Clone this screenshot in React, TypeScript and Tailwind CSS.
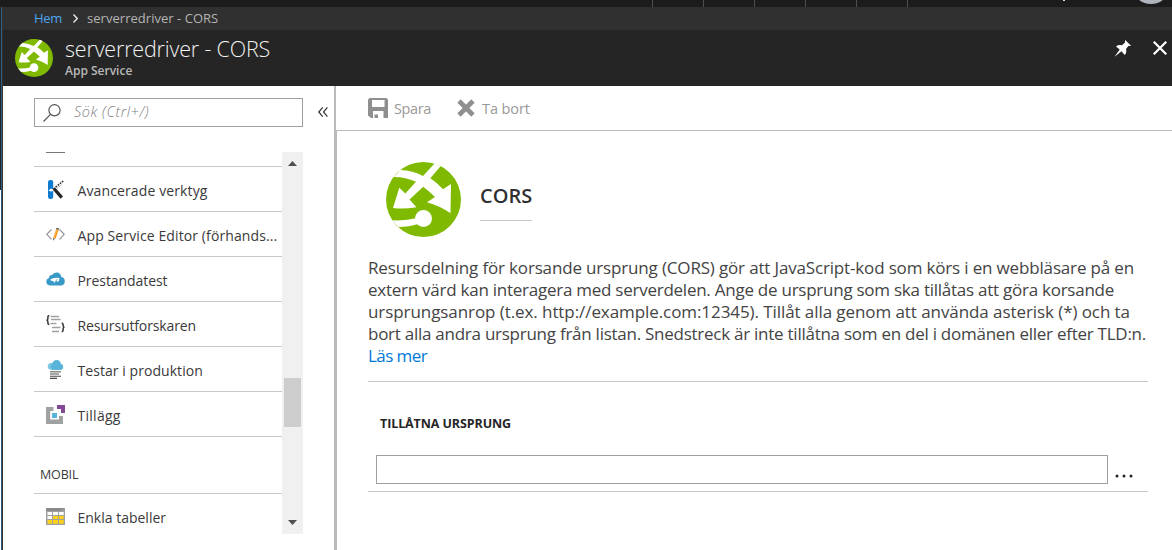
import type { ReactNode } from "react";

function AppServiceLogo({ className }: { className: string }) {
  return (
    <svg viewBox="0 0 75 75" className={className}>
      <circle cx="37.5" cy="37.5" r="37.5" fill="#7fba00" />
      <path
        fill="#fff"
        d="M14.5 8Q27 8.500 37 14L48.500 1.600Q52 2.500 54.500 4.200L44.300 16.200Q51 20.500 57 27.200L65 22L64.500 51.300Q53 43.500 41 40.300L49 35Q44 30 37.300 24.700L23.500 37.600L30.500 45.300Q18 47.300 7 46L13.300 25.800L19.300 31.500L30 19.800Q19 14.800 7.700 15Z"
      />
      <path fill="#fff" d="M6.300 58.300Q20 59 30 56.300L32 62Q23 65 12.300 65Z" />
      <circle cx="37.500" cy="56.500" r="8.500" fill="#fff" />
    </svg>
  );
}

function KuduIcon() {
  return (
    <svg viewBox="0 0 19 19" className="h-[19px] w-[19px]">
      <rect x="2" y="0" width="5.200" height="19" rx="2.200" fill="#0f7bd0" />
      <path d="M2.500 10.500L5 8.600L9.500 10.500L5 11.400Z" fill="#fff" />
      <path d="M8 8.600L15.800 17.600" stroke="#252525" strokeWidth="3.200" />
      <path d="M7.500 8.800L17.500 .800" stroke="#333" strokeWidth="1.500" strokeDasharray="1.700 1" />
      <path d="M11.500 8L16 4.200" stroke="#777" strokeWidth="1" strokeDasharray="1 1" />
    </svg>
  );
}

function EditorIcon() {
  return (
    <svg viewBox="0 0 19 19" className="h-[19px] w-[19px]" fill="none">
      <path d="M5.500 4.300L.800 9.300L5.500 14.300M13.500 4.300L18.200 9.300L13.500 14.300" stroke="#929292" strokeWidth="1.200" />
      <path d="M11.500 4.200L8.500 13.200" stroke="#ff9a1a" strokeWidth="2.600" />
      <path d="M10.900 4.300L8 12.800" stroke="#ffc36a" strokeWidth=".7" />
      <path d="M10.200 3.400L13 4.300" stroke="#666" strokeWidth="1.500" />
      <path d="M7.200 13L9 13.600L7.100 15.700Z" fill="#555" />
    </svg>
  );
}

function LoadTestIcon() {
  return (
    <svg viewBox="0 0 19 19" className="h-[19px] w-[19px]">
      <path fill="#3999c6" d="M4 15.500A3.900 3.900 0 0 1 3 7.900Q3.200 5 6 5.100Q7.500 2.500 10.500 2.500Q14.800 2.700 15.300 7.100A4.250 4.250 0 0 1 15 15.500Z" />
      <path fill="#fff" d="M3.800 10.100Q7.500 6.800 13.500 8L12.800 11.500L10 11.300L8 13.500L7.800 11.500Z" />
      <path d="M8.300 13L11.500 9" stroke="#3999c6" strokeWidth=".7" />
    </svg>
  );
}

function ExplorerIcon() {
  return (
    <svg viewBox="0 0 19 19" className="h-[19px] w-[19px]" fill="none">
      <path d="M4.500 1.500H13M5 4.500H14.500M4.500 8.500H10.500M6 12.500H14.500M6 16.500H13" stroke="#a0a1a2" strokeWidth="1.400" />
      <path d="M3.300 .600Q1.800 .700 1.900 2.200V3.500Q1.900 5 .600 5.200Q1.900 5.400 1.900 6.800V8Q1.900 9.500 3.300 9.600" stroke="#333" strokeWidth="1.500" />
      <path d="M15.700 7.900Q17.100 8 17.100 9.400V10.500Q17.100 12 18.400 12.200Q17.100 12.400 17.100 13.800V15.200Q17.100 16.600 15.700 16.700" stroke="#333" strokeWidth="1.500" />
    </svg>
  );
}

function ProductionIcon() {
  return (
    <svg viewBox="0 0 19 19" className="h-[19px] w-[19px]">
      <path fill="#7cc8e6" d="M4.500 9.800A3.500 3.500 0 0 1 3.500 3.200Q6 2.200 7.500 3.500L9 9.800Z" />
      <path fill="#59b4d9" d="M7.500 10A3.300 3.300 0 0 1 6.300 4Q7 0 10.800 0Q14.300 .200 14.800 3.800A3.200 3.200 0 0 1 15 10Z" />
      <path d="M4 11.700H15M4 14H13" stroke="#8a8b8c" strokeWidth="1.600" />
      <path d="M4 16.300H15M4 18.400H11" stroke="#4a4a4a" strokeWidth="1.100" />
    </svg>
  );
}

function ExtensionsIcon() {
  return (
    <svg viewBox="0 0 19 19" className="h-[19px] w-[19px]">
      <path fill="#a0a1a2" d="M0 2H7.500V6H4.200V14.500H13V11H17V19H0Z" />
      <path fill="#804998" d="M11 0H19V8H15V4H11Z" />
      <path fill="#59b4d9" d="M6 8H11V13H6Z" />
    </svg>
  );
}

function TablesIcon() {
  return (
    <svg viewBox="0 0 19 17" className="h-[17px] w-[19px]">
      <path fill="#a0a1a2" d="M0 0H19V17H0Z" />
      <path fill="#8b8b8b" d="M0 0H19L15 3H0Z" />
      <path fill="#fff" d="M1.500 4H6V7H1.500ZM7 4H12V7H7ZM13 4H17.700V7H13ZM1.500 8H6V11H1.500Z" />
      <path fill="#fcd116" d="M7 8H12V11H7ZM13 8H17.700V11H13ZM1.500 12H6V15.700H1.500ZM7 12H12V15.700H7ZM13 12H17.700V15.700H13Z" />
    </svg>
  );
}

function MenuItem({ icon, label }: { icon: ReactNode; label: ReactNode }) {
  return (
    <li className="flex h-[45px] shrink-0 items-center border-b border-[#c8c8c8] pl-3">
      <span className="flex w-[31.500px] shrink-0 items-center">{icon}</span>
      <span className="whitespace-nowrap pt-[3px] text-[14px] leading-5">{label}</span>
    </li>
  );
}

function Sidebar() {
  return (
    <aside className="flex w-[331px] shrink-0 flex-col pl-[31px]">
      <div className="flex items-start pt-3">
        <label className="flex h-[29px] w-[269px] items-center border border-[#a0a0a0] pl-2">
          <svg viewBox="0 0 18 18" className="h-[18px] w-[18px]" fill="none" stroke="#555" strokeWidth="1.200">
            <circle cx="11.500" cy="6.300" r="5.600" />
            <path d="M7.500 10.300L.500 17.500" />
          </svg>
          <span className="pb-px pl-[13px] text-[14.500px] leading-5 font-light tracking-[0.550px] text-[#808080] italic">Sök (Ctrl+/)</span>
        </label>
        <svg viewBox="0 0 10 10" className="mt-[9px] ml-[15px] h-[10px] w-[10px]" fill="none" stroke="#333" strokeWidth="1.200">
          <path d="M4.700 .400L.800 5L4.700 9.600M9.400 .400L5.500 5L9.400 9.600" />
        </svg>
      </div>
      <div className="mt-[25px] flex h-[382px] w-[269px]">
        <div className="flex w-[248px] flex-col overflow-hidden text-[#3a3a3a]">
          <div className="flex h-[15px] shrink-0 border-b border-[#c8c8c8] pl-3">
            <span className="h-px w-[19px] bg-[#777]" />
          </div>
          <ul className="flex flex-col">
            <MenuItem icon={<KuduIcon />} label={<span className="tracking-[0.118px]">Avancerade verktyg</span>} />
            <MenuItem icon={<EditorIcon />} label={<span className="tracking-[0.110px]">App Service Editor (förhands...</span>} />
            <MenuItem icon={<LoadTestIcon />} label={<span className="tracking-[-0.069px]">Prestandatest</span>} />
            <MenuItem icon={<ExplorerIcon />} label={<span className="tracking-[-0.121px]">Resursutforskaren</span>} />
            <MenuItem icon={<ProductionIcon />} label={<span className="tracking-[0.057px]">Testar i produktion</span>} />
            <MenuItem icon={<ExtensionsIcon />} label={<span className="tracking-[0.280px]">Tillägg</span>} />
          </ul>
          <h2 className="flex h-[57px] shrink-0 items-end border-b border-[#c8c8c8] pb-[9px] pl-1.5 text-[12.500px] leading-[18px] tracking-[-0.150px]">MOBIL</h2>
          <ul className="flex flex-col">
            <MenuItem icon={<TablesIcon />} label="Enkla tabeller" />
          </ul>
        </div>
        <div className="flex w-[21px] flex-col items-center bg-[#f0f0f0]">
          <svg viewBox="0 0 9 5" className="mt-[9px] h-[5px] w-[9px]"><path d="M0 5L4.500 0L9 5Z" fill="#505050" /></svg>
          <div className="mt-[212px] h-[49px] w-[17px] bg-[#cdcdcd]" />
          <svg viewBox="0 0 9 5" className="mt-[93px] h-[5px] w-[9px]"><path d="M0 0L4.500 5L9 0Z" fill="#505050" /></svg>
        </div>
      </div>
    </aside>
  );
}

function Toolbar() {
  return (
    <div className="flex h-[45px] shrink-0 items-center border-b border-[#bababa] pl-8 text-[#999]">
      <svg viewBox="0 0 20 20" className="h-5 w-5">
        <path fill="#8f8f8f" d="M1.500 0H18.500L20 1.500V20H3L0 17.500V1.500Z" />
        <path fill="#fff" d="M4 2H16.500V9H4Z" />
        <path fill="#fff" d="M5 13H15.500V20H10V16.500H6.500V20H5Z" />
      </svg>
      <span className="w-[63px] pt-px pl-1.5 text-[14.500px] tracking-[-0.380px]">Spara</span>
      <svg viewBox="0 0 18 18" className="ml-1.5 h-[18px] w-[18px]">
        <path d="M2 2L16 16M16 2L2 16" stroke="#8f8f8f" strokeWidth="4.600" />
      </svg>
      <span className="pt-px pl-[7px] text-[14.500px] tracking-[-0.080px]">Ta bort</span>
    </div>
  );
}

function Content() {
  return (
    <section className="flex min-w-0 flex-1 flex-col">
      <Toolbar />
      <div className="flex flex-1 flex-col border-l border-[#bababa] pt-[31px] pr-6 pl-[31px]">
        <div className="flex pl-[18px]">
          <AppServiceLogo className="h-[75px] w-[75px]" />
          <h2 className="mt-[18px] ml-[19px] h-[41px] border-b border-[#c8c8c8] text-[20px] leading-[31px] font-semibold text-[#303030]">CORS</h2>
        </div>
        <p className="mt-5 flex flex-col text-[17px] leading-[22px] whitespace-nowrap text-[#444]">
          <span className="tracking-[-0.161px]">Resursdelning för korsande ursprung (CORS) gör att JavaScript-kod som körs i en webbläsare på en</span>
          <span className="tracking-[-0.252px]">extern värd kan interagera med serverdelen. Ange de ursprung som ska tillåtas att göra korsande</span>
          <span className="tracking-[-0.077px]">ursprungsanrop (t.ex. http://example.com:12345). Tillåt alla genom att använda asterisk (*) och ta</span>
          <span className="tracking-[-0.257px]">bort alla andra ursprung från listan. Snedstreck är inte tillåtna som en del i domänen eller efter TLD:n.</span>
          <a className="tracking-[-0.580px] text-[#0078d7]">Läs mer</a>
        </p>
        <div className="mt-[14px] border-y border-[#c8c8c8] pb-[7px]">
          <h3 className="pt-8 pl-3 text-[12.500px] leading-[19px] font-bold tracking-[-0.100px] text-[#252525]">TILLÅTNA URSPRUNG</h3>
          <div className="mt-[22px] flex items-center pl-2">
            <div className="h-[29px] w-[732px] border border-[#a0a0a0]" />
            <svg viewBox="0 0 18 4" className="mt-3 ml-[6.500px] h-1 w-[18px]" fill="#252525">
              <circle cx="2" cy="2" r="1.500" />
              <circle cx="9" cy="2" r="1.500" />
              <circle cx="16" cy="2" r="1.500" />
            </svg>
          </div>
        </div>
      </div>
    </section>
  );
}

function TopBar() {
  return (
    <div className="flex h-[7px] shrink-0 overflow-hidden bg-[#1c1c1c]">
      <div className="flex w-[908px] shrink-0 justify-end gap-[50px]">
        <i className="w-px bg-[#505050]" />
        <i className="w-px bg-[#505050]" />
        <i className="w-px bg-[#505050]" />
        <i className="w-px bg-[#505050]" />
        <i className="w-px bg-[#505050]" />
        <i className="w-px bg-[#505050]" />
      </div>
      <i className="ml-[155px] h-px w-[2px] shrink-0 bg-[#ddd]" />
      <svg viewBox="0 0 28 4" className="ml-[72px] h-1 w-7 shrink-0"><ellipse cx="14" cy="-10" rx="17" ry="14" fill="#adb4bb" /></svg>
    </div>
  );
}

export default function App() {
  return (
    <div className="flex h-[550px] w-[1172px] flex-col overflow-hidden bg-white font-['Open_Sans',sans-serif]">
      <TopBar />
      <div className="flex min-h-0 flex-1">
        <div className="flex w-[3px] shrink-0">
          <i className="h-[183px] w-px bg-[#252525]" />
          <i className="w-px bg-[#2d5f80]" />
          <i className="w-px bg-[#333]" />
        </div>
        <div className="flex min-w-0 flex-1 flex-col">
          <nav className="flex h-[23px] shrink-0 items-center bg-[#303030] pl-[31px] text-[13px] text-[#b4b4b4]">
            <span className="pt-px tracking-[-0.300px] text-[#4da6f0]">Hem</span>
            <svg viewBox="0 0 5 9" className="mr-[9.500px] ml-[10.500px] h-[9px] w-[5px]" fill="none" stroke="#eee" strokeWidth="1.300">
              <path d="M.500 .500L4.300 4.500L.500 8.500" />
            </svg>
            <span className="pt-px tracking-[0.030px]">serverredriver - CORS</span>
          </nav>
          <header className="flex h-14 shrink-0 bg-[#252525] pl-3">
            <AppServiceLogo className="mt-[9px] h-[38px] w-[38px]" />
            <div className="flex flex-1 flex-col pt-1 pl-3">
              <h1 className="text-[21.500px] leading-[30px] font-light tracking-[-0.180px] text-[#f2f2f2]">serverredriver - CORS</h1>
              <p className="text-[12px] leading-[14px] font-semibold text-[#b8b8b8]">App Service</p>
            </div>
            <svg viewBox="0 0 17 17" className="mt-2.5 h-[17px] w-[17px]" fill="#fff">
              <path d="M11.200 0L17 5.700Q15.500 6.200 14.500 5.800L12 9Q13 12.500 10.700 15L7.500 11.200L.500 16.700L5.700 9.500L2 6.500Q4.500 4.500 8 5.300L11 2.500Q10.700 1 11.200 0Z" />
            </svg>
            <svg viewBox="0 0 14 14" className="mt-[11px] mr-[5px] ml-[22px] h-[14px] w-[14px]" stroke="#fff" strokeWidth="2.200">
              <path d="M.700 .700L13.300 13.300M13.300 .700L.700 13.300" />
            </svg>
          </header>
          <main className="flex min-h-0 flex-1">
            <Sidebar />
            <div className="w-[2px] shrink-0 bg-[#bababa]" />
            <Content />
          </main>
        </div>
      </div>
    </div>
  );
}
